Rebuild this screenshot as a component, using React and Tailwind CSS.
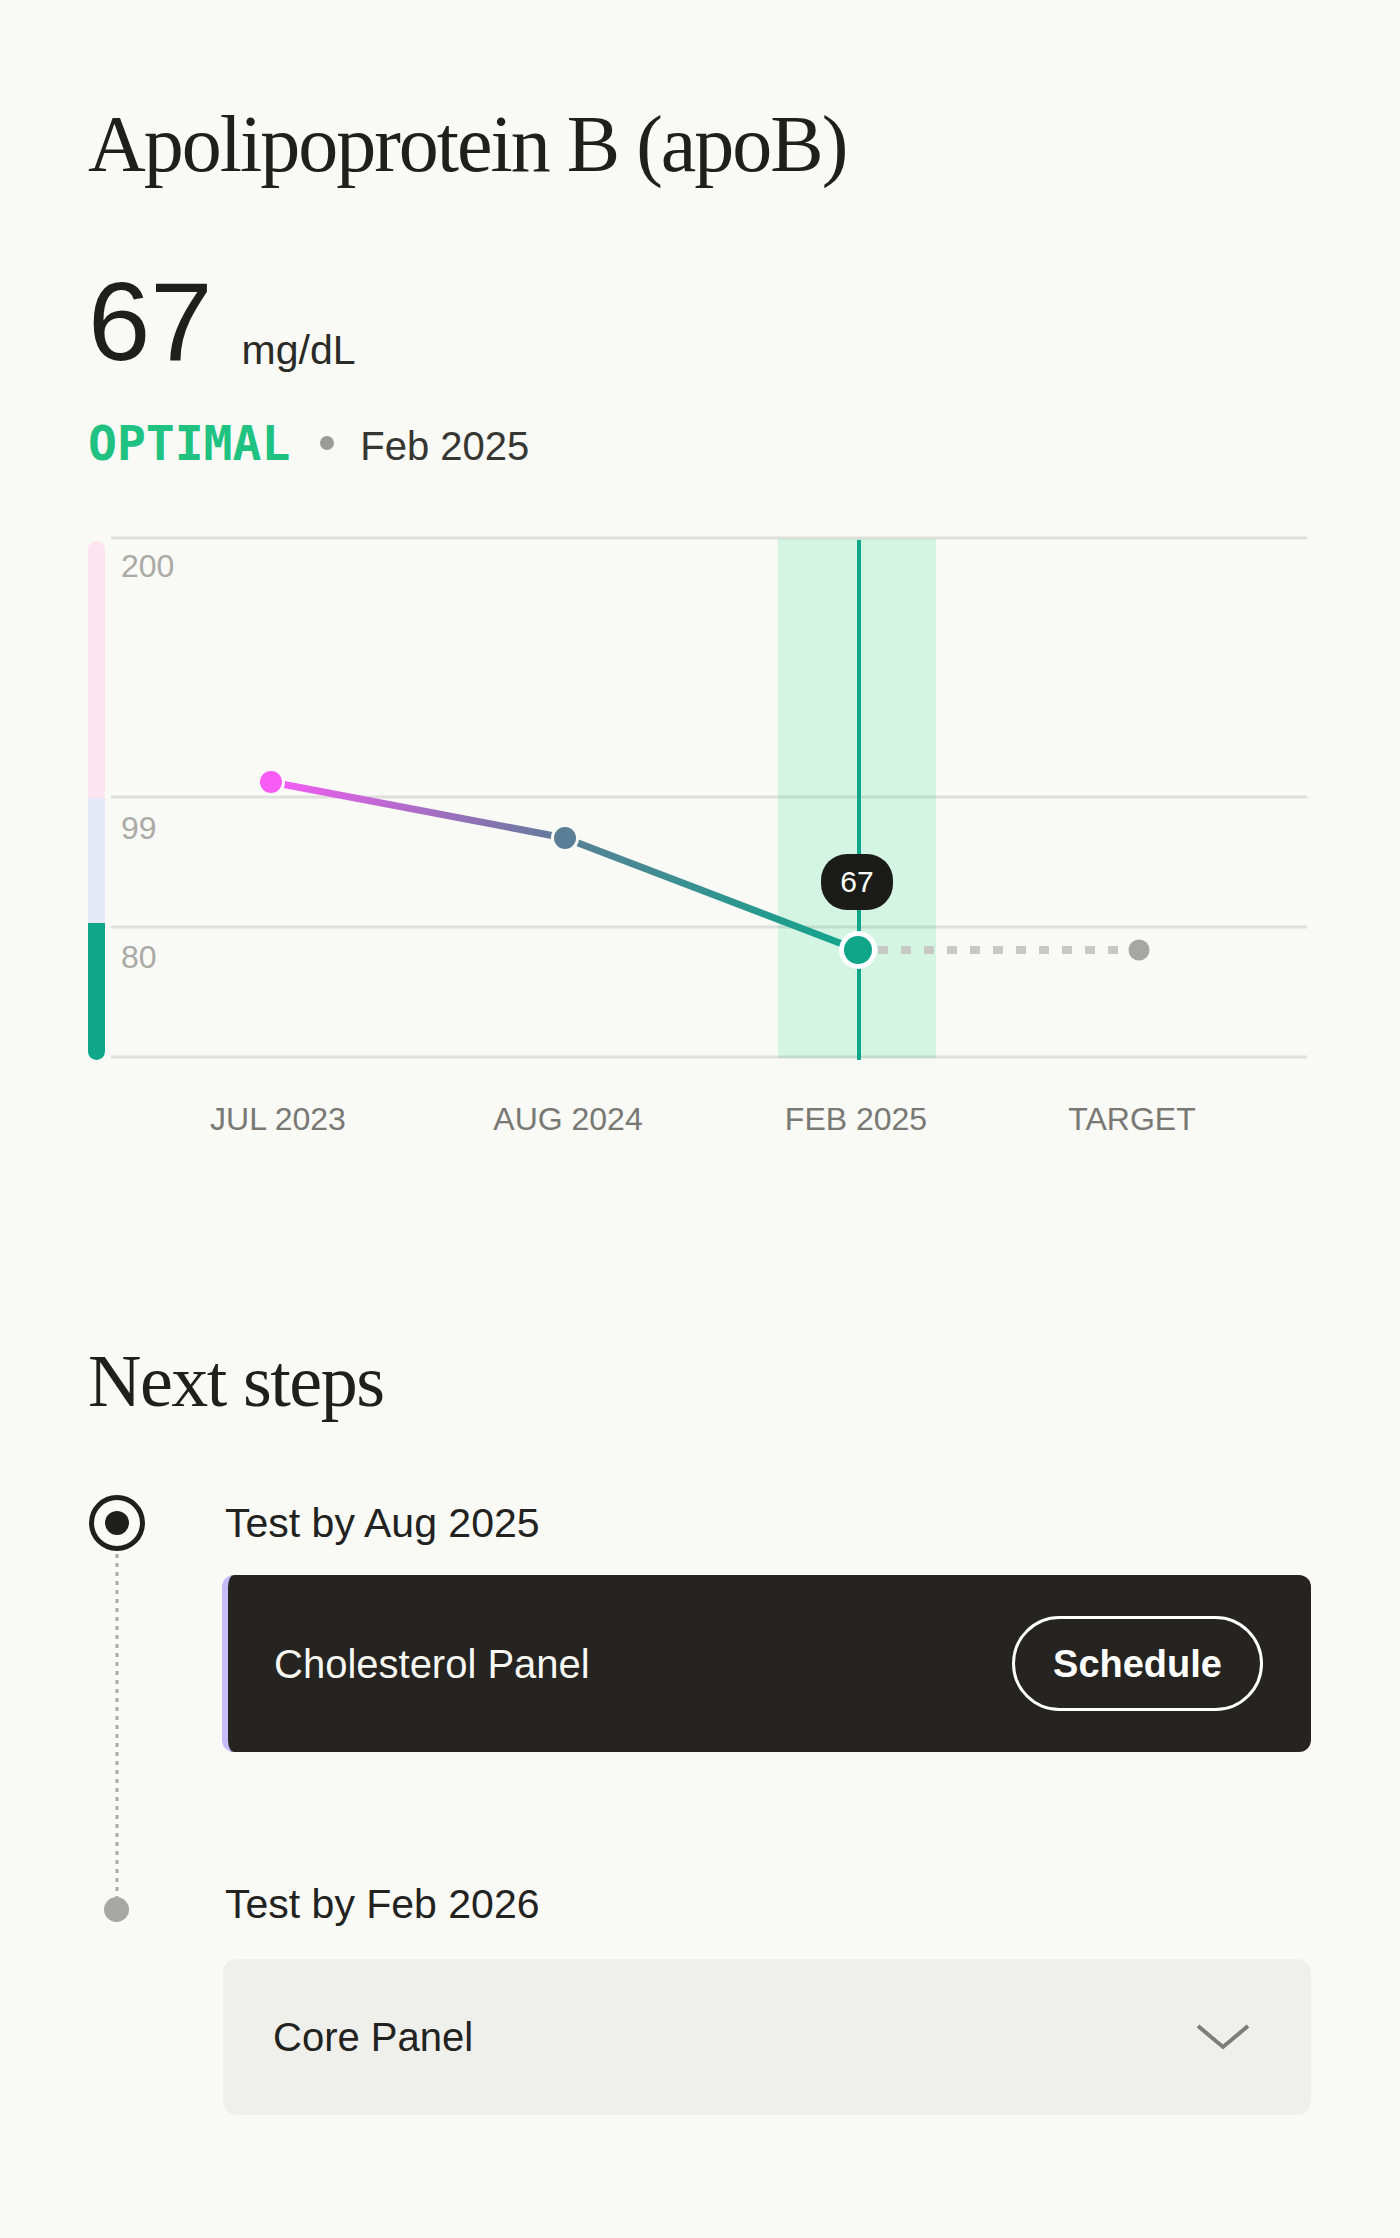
import React from "react";

function Chart() {
  return (
    <div className="mt-[67px]">
      <div className="relative h-[530px] w-[1223px]">
        <svg
          width="1223"
          height="530"
          viewBox="88 534 1223 530"
          className="absolute left-0 top-0"
        >
          <defs>
            <clipPath id="barclip">
              <rect x="88" y="541" width="17" height="519" rx="8.5" />
            </clipPath>
            <linearGradient id="seg1" gradientUnits="userSpaceOnUse" x1="271" y1="782" x2="565" y2="838">
              <stop offset="0" stopColor="#f85cf5" />
              <stop offset="1" stopColor="#5e7c98" />
            </linearGradient>
            <linearGradient id="seg2" gradientUnits="userSpaceOnUse" x1="565" y1="838" x2="858" y2="950">
              <stop offset="0" stopColor="#588096" />
              <stop offset="1" stopColor="#0fa68a" />
            </linearGradient>
          </defs>

          <rect x="778" y="539" width="158" height="519" fill="#d5f5e4" />

          <g stroke="#000" strokeOpacity="0.1" strokeWidth="3">
            <line x1="111" y1="538" x2="1307" y2="538" />
            <line x1="111" y1="797" x2="1307" y2="797" />
            <line x1="111" y1="927" x2="1307" y2="927" />
            <line x1="111" y1="1057" x2="1307" y2="1057" />
          </g>

          <g clipPath="url(#barclip)">
            <rect x="88" y="541" width="17" height="257" fill="#fde4ef" />
            <rect x="88" y="798" width="17" height="125" fill="#e4e8f7" />
            <rect x="88" y="923" width="17" height="137" fill="#0fa68a" />
          </g>

          <line x1="859" y1="540" x2="859" y2="1060" stroke="#0fa68a" strokeWidth="4" />

          <line x1="271" y1="782" x2="565" y2="838" stroke="url(#seg1)" strokeWidth="7" />
          <line x1="565" y1="838" x2="858" y2="950" stroke="url(#seg2)" strokeWidth="7" />

          <line
            x1="878"
            y1="950"
            x2="1128"
            y2="950"
            stroke="#c8c8c4"
            strokeWidth="8"
            strokeDasharray="10 13"
          />

          <circle cx="271" cy="782" r="14" fill="#f9f9f5" />
          <circle cx="271" cy="782" r="11" fill="#f85cf5" />
          <circle cx="565" cy="838" r="14" fill="#f9f9f5" />
          <circle cx="565" cy="838" r="11" fill="#5b7e97" />
          <circle cx="1139" cy="950" r="10.5" fill="#a6a6a2" />
          <circle cx="858" cy="950" r="19" fill="#ffffff" />
          <circle cx="858" cy="950" r="14" fill="#0fa68a" />
        </svg>

        <span className="absolute left-[33px] top-[16px] text-[32px] leading-[32px] text-[#abaaa6]">200</span>
        <span className="absolute left-[33px] top-[278px] text-[32px] leading-[32px] text-[#abaaa6]">99</span>
        <span className="absolute left-[33px] top-[407px] text-[32px] leading-[32px] text-[#abaaa6]">80</span>

        <div className="absolute left-[733px] top-[320px] flex h-[56px] w-[72px] items-center justify-center rounded-[26px] bg-[#1b1b1a] text-[30px] leading-[30px] text-white">
          67
        </div>
      </div>

      <div className="mt-[35px] flex h-[40px] items-center text-[32px] leading-[40px] text-[#787874]">
        <span className="ml-[110px] w-[160px] text-center">JUL 2023</span>
        <span className="ml-[130px] w-[160px] text-center">AUG 2024</span>
        <span className="ml-[128px] w-[160px] text-center">FEB 2025</span>
        <span className="ml-[116px] w-[160px] text-center">TARGET</span>
      </div>
    </div>
  );
}

function NextSteps() {
  return (
    <div>
      <h2 className="mt-[205px] font-['Liberation_Serif',serif] text-[74px] font-normal leading-[74px] tracking-[-0.02em] text-[#1f1f1c]">
        Next steps
      </h2>
      <div className="mt-[77px] flex">
        <div className="flex w-[137px] flex-col items-start">
          <div className="ml-[1px] flex h-[56px] w-[56px] items-center justify-center rounded-full border-[5px] border-[#1f1f1c]">
            <div className="h-[24px] w-[24px] rounded-full bg-[#1f1f1c]" />
          </div>
          <svg width="6" height="346" className="ml-[26px]">
            <line x1="3" y1="3" x2="3" y2="346" stroke="#a9a9a5" strokeWidth="3" strokeDasharray="4 5" />
          </svg>
          <div className="ml-[16px] h-[25px] w-[25px] rounded-full bg-[#a7a7a3]" />
        </div>

        <div className="flex flex-1 flex-col">
          <div className="h-[56px] text-[41px] leading-[56px] text-[#222220]">Test by Aug 2025</div>
          <div className="-ml-[3px] mt-[24px] flex h-[177px] items-center justify-between rounded-[12px] border-l-[6px] border-[#c6bbfb] bg-[#252420] pl-[46px] pr-[48px]">
            <span className="text-[40px] leading-[48px] text-[#f7f7f3]">Cholesterol Panel</span>
            <button className="flex h-[95px] items-center rounded-full border-[3px] border-white px-[38px] text-[38px] font-bold leading-[40px] text-white">
              Schedule
            </button>
          </div>

          <div className="mt-[124px] h-[56px] text-[41px] leading-[56px] text-[#222220]">Test by Feb 2026</div>
          <div className="-ml-[2px] mt-[27px] flex h-[156px] items-center justify-between rounded-[14px] bg-[#efefeb] pl-[50px] pr-[61px]">
            <span className="text-[40px] leading-[48px] text-[#222220]">Core Panel</span>
            <svg width="54" height="28" viewBox="0 0 54 28">
              <polyline points="2,3 27,24 52,3" fill="none" stroke="#7d7d79" strokeWidth="4" strokeLinejoin="miter" />
            </svg>
          </div>
        </div>
      </div>
    </div>
  );
}

export default function App() {
  return (
    <div className="min-h-[2238px] w-full bg-[#f9f9f5] font-['Liberation_Sans',Arial,sans-serif] text-[#222220]">
      <div className="w-[1400px] pb-[123px] pl-[88px] pr-[89px] pt-[104px]">
        <h1 className="font-['Liberation_Serif',serif] text-[80px] font-normal leading-[80px] tracking-[-0.025em] text-[#1f1f1c]">
          Apolipoprotein B (apoB)
        </h1>

        <div className="mt-[82px] flex items-baseline">
          <span className="text-[112px] leading-[112px] text-[#1f1f1c]">67</span>
          <span className="ml-[29px] translate-y-[4px] text-[41px] leading-[40px] text-[#2a2a27]">mg/dL</span>
        </div>

        <div className="mt-[41px] flex items-baseline">
          <span className="font-['DejaVu_Sans_Mono',monospace] text-[48px] font-bold leading-[48px] text-[#1fc281]">OPTIMAL</span>
          <span className="ml-[30px] mr-[26px] h-[14px] w-[14px] self-center rounded-full bg-[#9b9b98]" />
          <span className="text-[40px] leading-[40px] text-[#363633]">Feb 2025</span>
        </div>

        <Chart />
        <NextSteps />
      </div>
    </div>
  );
}
